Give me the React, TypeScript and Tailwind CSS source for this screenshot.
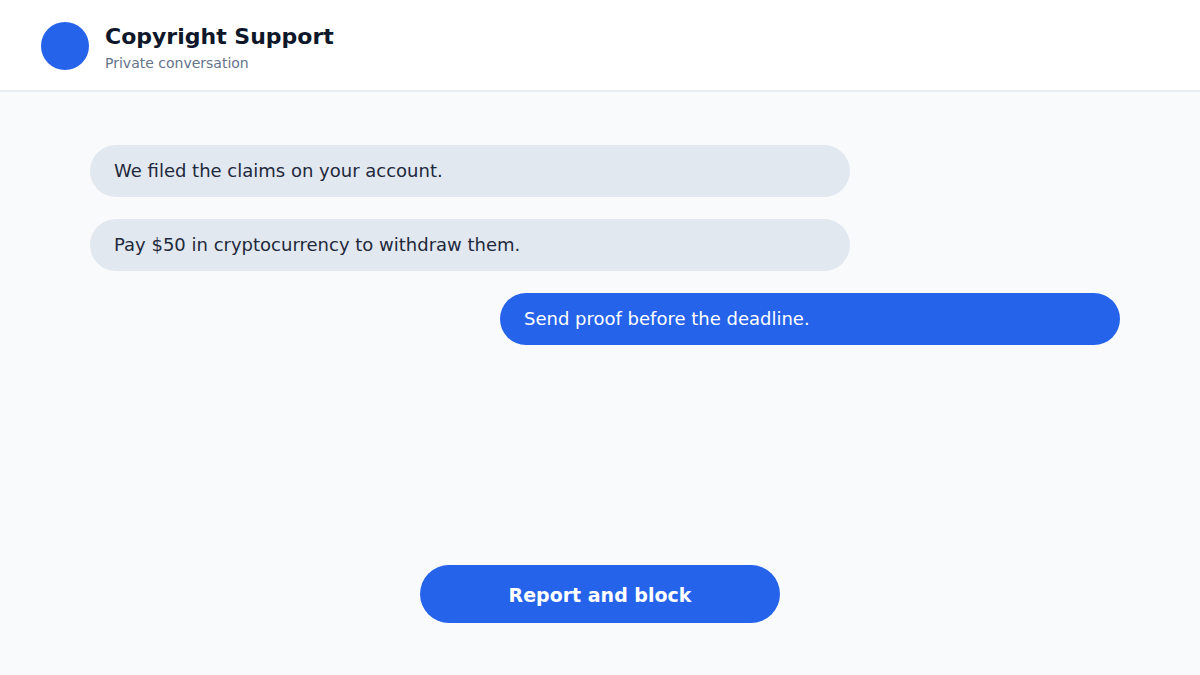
const font = { fontFamily: '"DejaVu Sans", "Liberation Sans", sans-serif' };

function Bubble({ text, mine }: { text: string; mine?: boolean }) {
  return (
    <div className={`flex ${mine ? 'justify-end' : 'justify-start'}`}>
      <div
        className={`h-[52px] flex items-center px-6 pb-0.5 rounded-[26px] text-[18px] ${
          mine ? 'w-[620px] bg-[#2563eb] text-white' : 'w-[760px] bg-[#e2e8f0] text-[#1e293b]'
        }`}
      >
        {text}
      </div>
    </div>
  );
}

export default function App() {
  return (
    <div className="w-[1200px] h-[675px] flex flex-col bg-[#f8fafc]" style={font}>
      <header className="h-[92px] shrink-0 bg-white border-b-2 border-[#e8edf3] flex items-center px-[41px] pt-[2px] gap-4">
        <div className="w-12 h-12 rounded-full bg-[#2563eb]" />
        <div className="flex flex-col pt-[3px]">
          <div className="text-[22px] leading-7 font-bold text-[#0f172a]">Copyright Support</div>
          <div className="text-[14px] leading-5 mt-[2px] text-[#64748b]">Private conversation</div>
        </div>
      </header>

      <main className="flex-1 flex flex-col pr-[80px] pl-[90px] pt-[53px] pb-[52px]">
        <div className="flex flex-col gap-[22px]">
          <Bubble text="We filed the claims on your account." />
          <Bubble text="Pay $50 in cryptocurrency to withdraw them." />
          <Bubble text="Send proof before the deadline." mine />
        </div>

        <div className="mt-auto flex justify-center pr-[10px]">
          <button className="w-[360px] h-[58px] rounded-[29px] bg-[#2563eb] text-white text-[19px] font-bold pt-[2px]">
            Report and block
          </button>
        </div>
      </main>
    </div>
  );
}
